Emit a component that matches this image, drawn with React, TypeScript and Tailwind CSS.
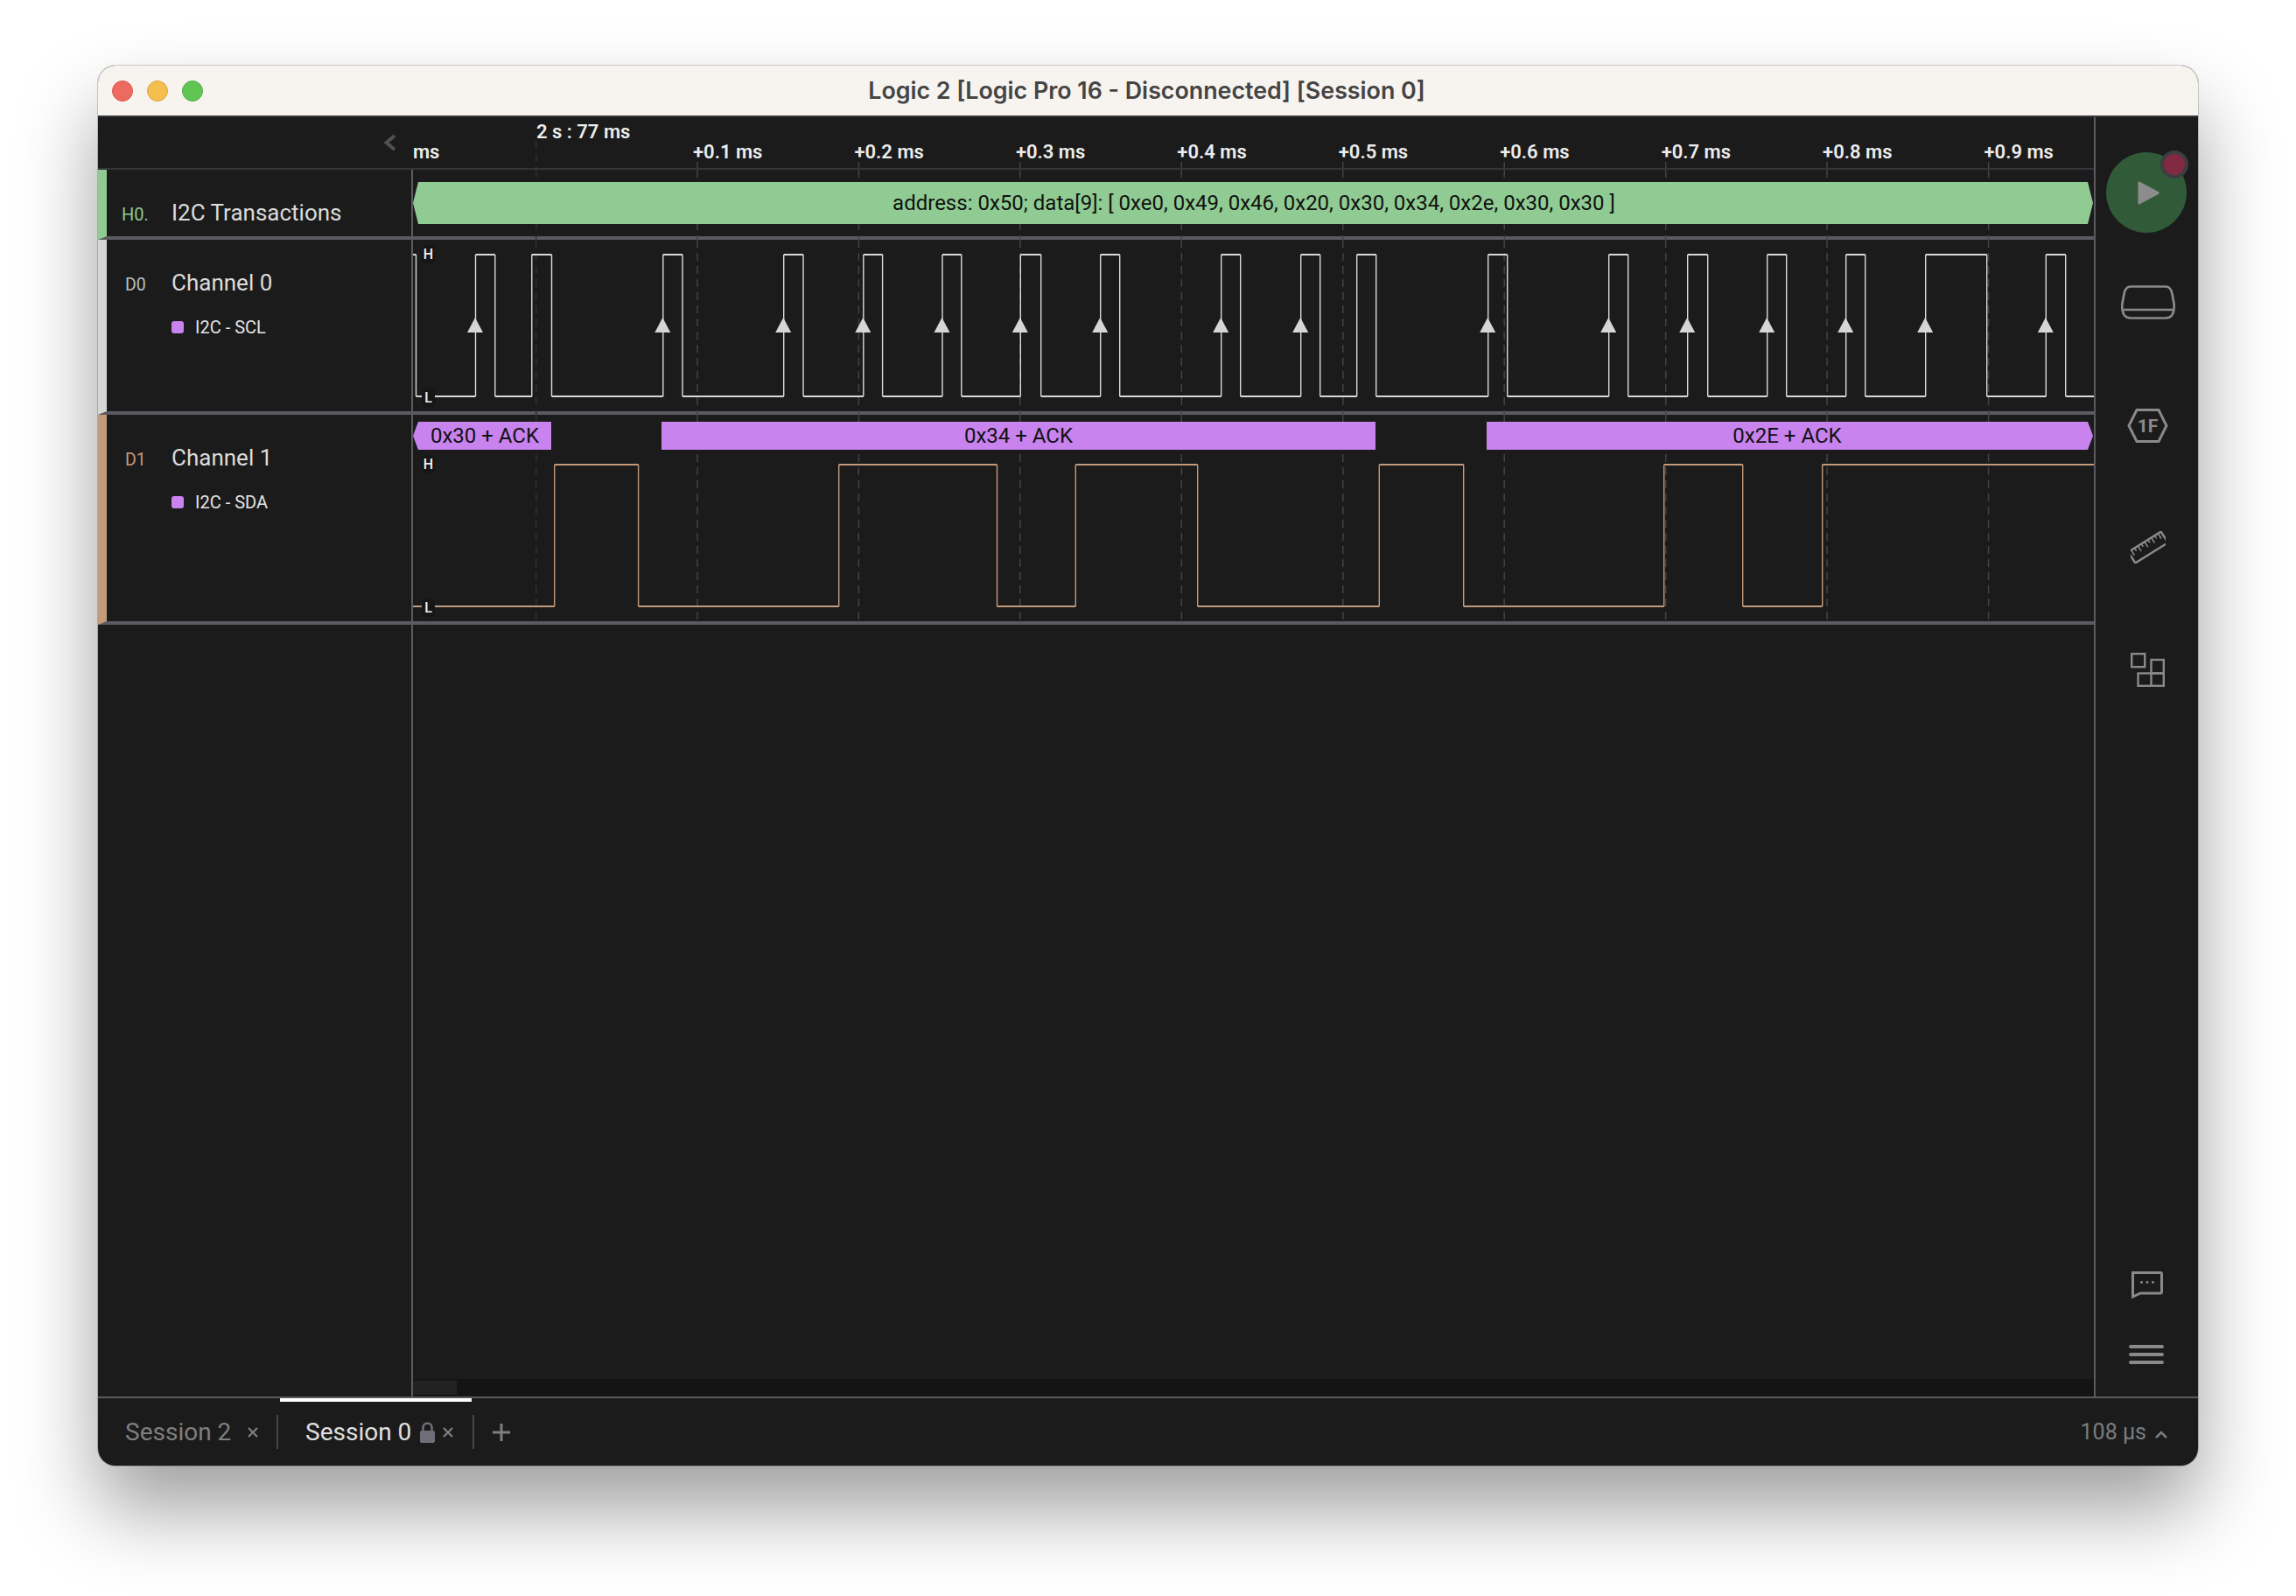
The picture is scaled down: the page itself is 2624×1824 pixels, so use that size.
const X0 = 472
const WAVE_W = 1921

const ticks = [797, 981.4, 1165.9, 1350.3, 1534.8, 1719.2, 1903.7, 2088.1, 2272.6]
const firstTick = 612.7

const sclRise = [543.5, 607.8, 757.8, 895.7, 986.8, 1077, 1166.3, 1257.7, 1395.7, 1486.7, 1550.7, 1700.7, 1838.7, 1928.7, 2019.7, 2109.7, 2200.7, 2338.3]
const sclFall = [565.8, 630.5, 780, 918, 1008.6, 1098.8, 1189.7, 1279.7, 1417.7, 1508.7, 1572.7, 1722.7, 1860.7, 1951.7, 2041.7, 2131.7, 2270.7, 2360.7]
const sclMarked = sclRise.filter((x) => x !== 607.8 && x !== 1550.7)

const sdaEdges = [633.7, 729.6, 958.7, 1139.5, 1229.3, 1368.7, 1576.3, 1672.7, 1901.7, 1991.7, 2082.7]

// signal edges are page x values, turned into separate wave segments
function Wave({ edges, high, low, startHigh, color }: { edges: number[]; high: number; low: number; startHigh: boolean; color: string }) {
  const pts = [X0, ...edges, X0 + WAVE_W]
  let flat = ""
  let steep = ""
  pts.slice(0, -1).forEach((x, i) => {
    const isHigh = startHigh ? i % 2 === 0 : i % 2 === 1
    flat += `M${x} ${isHigh ? high : low}H${pts[i + 1]}`
    if (i > 0) steep += `M${x} ${high}V${low}`
  })
  return (
    <>
      <path d={steep} stroke={color} strokeWidth="1.4" fill="none" />
      <path d={flat} stroke={color} strokeWidth="2" fill="none" />
    </>
  )
}

function Grid({ top, bottom }: { top: number; bottom: number }) {
  return (
    <>
      <path d={`M${firstTick} ${top}V${bottom}`} stroke="#303033" strokeWidth="1.5" strokeDasharray="9 6" />
      {ticks.map((x) => (
        <path key={x} d={`M${x} ${top}V${bottom}`} stroke="#434347" strokeWidth="1.5" strokeDasharray="9 6" />
      ))}
    </>
  )
}

function Canvas({ top, height, children }: { top: number; height: number; children?: React.ReactNode }) {
  return (
    <svg
      className="absolute left-0 top-0 overflow-visible"
      width={WAVE_W}
      height={height}
      viewBox={`${X0} ${top} ${WAVE_W} ${height}`}
    >
      {children}
    </svg>
  )
}

function Level({ label, className }: { label: string; className: string }) {
  return (
    <span className={`absolute left-[10px] flex h-[21px] w-[15px] items-center justify-center rounded-[5px] bg-[#161616] text-[16px] font-medium leading-none text-[#f0f0f0] ${className}`}>
      {label}
    </span>
  )
}

function Analyzer({ name }: { name: string }) {
  return (
    <div className="mt-[22px] flex items-center pl-[74px]">
      <span className="h-[14px] w-[14px] rounded-[3px] bg-[#c883ef]" />
      <span className="ml-[13px] text-[20px] leading-[24px] text-[#e4e4e4]">{name}</span>
    </div>
  )
}

function Close({ color = "#7f7f7f" }: { color?: string }) {
  return (
    <svg width="14" height="14" viewBox="0 0 14 14" className="shrink-0">
      <path d="M2 2L12 12M12 2L2 12" stroke={color} strokeWidth="2.2" />
    </svg>
  )
}

function Sidebar() {
  const c = "#8a8a8a"
  return (
    <aside className="flex w-[119px] shrink-0 flex-col items-center border-l-2 border-[#5a5a60] pb-[37px] pt-[40px]">
      <div className="relative flex h-[92px] w-[92px] -translate-x-[1px] items-center justify-center rounded-full bg-[#305a38]">
        <svg className="ml-[7px]" width="26" height="29" viewBox="0 0 26 29">
          <path d="M2 1.500L24 13.200Q25.500 14.500 24 15.800L2 27.500Q0.500 28 0.500 26V3Q0.500 1 2 1.500Z" fill="#8c8c8c" />
        </svg>
        <span className="absolute -right-[2px] -top-[2px] h-[32px] w-[32px] rounded-full border-4 border-[#3d3d42] bg-[#812a42]" />
      </div>

      <svg className="mt-[60px] translate-x-[1px]" width="62" height="39" viewBox="0 0 62 39" fill="none" stroke={c} strokeWidth="2.7">
        <path d="M11 1.500H51C55 1.500 57.500 4 58.500 10L60.700 22C61 27 60.500 31 58 34.500C56 37 54 37.500 51 37.500H11C8 37.500 6 37 4 34.500C1.500 31 1 27 1.300 22L3.500 10C4.500 4 7 1.500 11 1.500Z" />
        <path d="M2.500 28H59.500" />
      </svg>

      <svg className="mt-[102px] translate-x-[1px]" width="47" height="39" viewBox="0 0 47 39" fill="none">
        <path d="M11 1.500H36L45 19.500L36 37.500H11L2 19.500Z" stroke={c} strokeWidth="3" />
        <text x="23.500" y="27" textAnchor="middle" fontSize="21" fontWeight="700" fontFamily="Roboto, sans-serif" fill={c}>1F</text>
      </svg>

      <svg className="mt-[101px] translate-x-[1px]" width="40" height="37" viewBox="0 0 40 37" fill="none" stroke={c}>
        <g transform="rotate(-32 20 18.500)">
          <rect x="-2" y="11" width="44" height="15" strokeWidth="2.400" />
          <path d="M2 11v7M6.500 11v4M11 11v7M15.500 11v4M20 11v7M24.500 11v4M29 11v7M33.500 11v4M38 11v7" strokeWidth="1.600" />
        </g>
      </svg>

      <svg className="mt-[102px] translate-x-[1px]" width="39" height="39" viewBox="0 0 39 39" fill="none" stroke={c} strokeWidth="2.400">
        <rect x="1.200" y="1.200" width="15" height="15" />
        <rect x="23.500" y="8" width="14.300" height="15.500" />
        <rect x="8.500" y="23.500" width="29.300" height="14.300" />
        <path d="M23.500 23.500V37.800" />
      </svg>

      <svg className="mt-auto" width="36" height="31" viewBox="0 0 36 31" fill="none">
        <path d="M1.500 29V1.500H33Q34.500 1.500 34.500 3V23.500Q34.500 25 33 25H10Z" stroke={c} strokeWidth="3" />
        <circle cx="11.500" cy="12.500" r="1.400" fill={c} />
        <circle cx="18" cy="12.500" r="1.400" fill={c} />
        <circle cx="24.500" cy="12.500" r="1.400" fill={c} />
      </svg>

      <div className="mt-[53px] flex w-[40px] -translate-x-[1px] flex-col gap-[4.500px]">
        <span className="h-[4.500px] rounded-full bg-[#8a8a8a]" />
        <span className="h-[4.500px] rounded-full bg-[#8a8a8a]" />
        <span className="h-[4.500px] rounded-full bg-[#8a8a8a]" />
      </div>
    </aside>
  )
}

function Ruler() {
  return (
    <header className="relative h-[60px] shrink-0 border-b-2 border-[#35353a] text-[22px] font-semibold leading-[22px] text-[#ececec]">
      <svg className="absolute left-[326px] top-[19px]" width="15" height="20" viewBox="0 0 15 20">
        <path d="M13 2L3.500 10L13 18" stroke="#505050" strokeWidth="4" fill="none" />
      </svg>
      <div className="pl-[501px] pt-[6px]">2 s : 77 ms</div>
      <div className="mt-[1px] flex">
        <span className="ml-[360px] w-[320px] shrink-0">ms</span>
        {ticks.map((_, i) => (
          <span key={i} className="w-[184.450px] shrink-0 whitespace-nowrap">+0.{i + 1} ms</span>
        ))}
      </div>
      <svg className="absolute left-[360px] top-0 overflow-visible" width={WAVE_W} height="58" viewBox={`${X0} 134 ${WAVE_W} 58`}>
        <path d={`M${firstTick} 161V192`} stroke="#303033" strokeWidth="1.5" strokeDasharray="9 6" />
        {ticks.map((x) => (
          <path key={x} d={`M${x} 185V192`} stroke="#434347" strokeWidth="1.5" />
        ))}
      </svg>
    </header>
  )
}

export default function App() {
  return (
    <div className="h-[1824px] w-[2624px] overflow-hidden bg-white pl-[112px] pt-[75px] font-['Roboto',sans-serif]">
      <div className="flex h-[1600px] w-[2400px] flex-col overflow-hidden rounded-[20px] bg-[#1b1b1b] shadow-[0_50px_90px_rgba(0,0,0,0.38),0_0_0_1px_rgba(0,0,0,0.18)]">
        {/* title bar */}
        <div className="relative flex h-[59px] shrink-0 items-center justify-center border-b-2 border-[#35353a] bg-[#f7f3ef] pr-[3px]">
          <div className="absolute left-[16px] top-[17px] flex gap-[16px]">
            <span className="h-[24px] w-[24px] rounded-full border border-[#d9544c] bg-[#ec6a5e]" />
            <span className="h-[24px] w-[24px] rounded-full border border-[#d9a441] bg-[#f5bf4f]" />
            <span className="h-[24px] w-[24px] rounded-full border border-[#4fae48] bg-[#61c554]" />
          </div>
          <span className="text-[26.800px] font-semibold text-[#444444] font-['Inter',sans-serif]">
            Logic 2 [Logic Pro 16 - Disconnected] [Session 0]
          </span>
        </div>

        <div className="flex min-h-0 flex-1">
          <main className="flex min-w-0 flex-1 flex-col">
            <Ruler />

            {/* H0 */}
            <section className="flex h-[80px] shrink-0 border-b-4 border-l-[10px] border-b-[#5a5a60] border-l-[#8fcb92]">
              <div className="flex w-[348px] shrink-0 items-baseline pt-[34px]">
                <span className="w-[74px] pl-[17px] text-[20px] text-[#8fcb92]">H0.</span>
                <span className="text-[26px] leading-[30px] text-[#dcdcdc]">I2C Transactions</span>
              </div>
              <div className="relative flex-1 border-l-2 border-[#5a5a60]">
                <Canvas top={194} height={76}>
                  <Grid top={194} bottom={274} />
                </Canvas>
                <div className="relative mr-[1px] mt-[14px] flex h-[48px] items-center justify-center bg-[#8fcb92] pl-[2px] text-[24px] text-[#111111] [clip-path:polygon(6px_0,calc(100%-6px)_0,100%_50%,calc(100%-6px)_100%,6px_100%,0_50%)]">
                  address: 0x50; data[9]: [ 0xe0, 0x49, 0x46, 0x20, 0x30, 0x34, 0x2e, 0x30, 0x30 ]
                </div>
              </div>
            </section>

            {/* D0 */}
            <section className="flex h-[200px] shrink-0 border-b-4 border-l-[10px] border-b-[#5a5a60] border-l-[#d6d6d6]">
              <div className="w-[348px] shrink-0 pt-[34px]">
                <div className="flex items-baseline">
                  <span className="w-[74px] pl-[21px] text-[19.500px] text-[#bdbdbd]">D0</span>
                  <span className="text-[26px] leading-[30px] text-[#dcdcdc]">Channel 0</span>
                </div>
                <Analyzer name="I2C - SCL" />
              </div>
              <div className="relative flex-1 border-l-2 border-[#5a5a60]">
                <Canvas top={274} height={196}>
                  <Grid top={274} bottom={474} />
                  <Wave
                    edges={[475.5, ...sclRise.flatMap((x, i) => [x, sclFall[i]])]}
                    high={291}
                    low={453}
                    startHigh
                    color="#d9d9d9"
                  />
                  {sclMarked.map((x) => (
                    <path key={x} d={`M${x - 0.5} 363L${x + 8.5} 380H${x - 9.5}Z`} fill="#d6d6d6" />
                  ))}
                </Canvas>
                <Level label="H" className="top-[6px]" />
                <Level label="L" className="top-[170px]" />
              </div>
            </section>

            {/* D1 */}
            <section className="flex h-[240px] shrink-0 border-b-4 border-l-[10px] border-b-[#5a5a60] border-l-[#c39a7b]">
              <div className="w-[348px] shrink-0 pt-[34px]">
                <div className="flex items-baseline">
                  <span className="w-[74px] pl-[21px] text-[19.500px] text-[#c39a7b]">D1</span>
                  <span className="text-[26px] leading-[30px] text-[#dcdcdc]">Channel 1</span>
                </div>
                <Analyzer name="I2C - SDA" />
              </div>
              <div className="relative flex-1 border-l-2 border-[#5a5a60]">
                <Canvas top={474} height={236}>
                  <Grid top={474} bottom={710} />
                  <Wave edges={sdaEdges} high={531} low={693} startHigh={false} color="#c39a7b" />
                </Canvas>
                <Level label="H" className="top-[46px]" />
                <Level label="L" className="top-[210px]" />
                <div className="relative mt-[8px] flex h-[32px] text-[24px] text-[#111111]">
                  <div className="flex w-[158px] shrink-0 items-center justify-center bg-[#c883ef] pl-[6px] [clip-path:polygon(6px_0,100%_0,100%_100%,6px_100%,0_50%)]">0x30 + ACK</div>
                  <div className="ml-[126px] flex w-[816px] shrink-0 items-center justify-center bg-[#c883ef]">0x34 + ACK</div>
                  <div className="ml-[127px] flex w-[693px] shrink-0 items-center justify-center bg-[#c883ef] pr-[6px] [clip-path:polygon(0_0,calc(100%-6px)_0,100%_50%,calc(100%-6px)_100%,0_100%)]">0x2E + ACK</div>
                </div>
              </div>
            </section>

            {/* empty part of the capture */}
            <section className="flex min-h-0 flex-1">
              <div className="w-[358px] shrink-0" />
              <div className="flex flex-1 flex-col justify-end border-l-2 border-[#5a5a60]">
                <div className="h-[20px] bg-[#141414] py-[2px]">
                  <div className="h-[16px] w-[50px] bg-[#222222]" />
                </div>
              </div>
            </section>
          </main>

          <Sidebar />
        </div>

        {/* session tabs */}
        <footer className="flex h-[79px] shrink-0 items-center border-t-2 border-[#5a5a60] text-[28px] leading-[34px]">
          <div className="flex w-[204px] shrink-0 items-center pl-[31px] text-[#7f7f7f]">
            <span>Session 2</span>
            <span className="ml-[18px]"><Close /></span>
          </div>
          <span className="h-[39px] w-[2px] bg-[#444444]" />
          <div className="relative flex h-full w-[222px] shrink-0 items-center pl-[31px] text-[#e0e0e0]">
            <span className="absolute left-[2px] top-0 h-[4px] w-[219px] bg-white" />
            <span>Session 0</span>
            <svg className="ml-[10px] shrink-0" width="17" height="24" viewBox="0 0 17 24">
              <path d="M3.500 11V6.500a5 5 0 0 1 10 0V11" stroke="#6f6f7a" strokeWidth="2.500" fill="none" />
              <rect x="0" y="10" width="17" height="14" rx="2" fill="#6f6f7a" />
            </svg>
            <span className="ml-[8px]"><Close /></span>
          </div>
          <span className="h-[39px] w-[2px] bg-[#444444]" />
          <svg className="ml-[21px]" width="20" height="20" viewBox="0 0 20 20">
            <path d="M10 0V20M0 10H20" stroke="#7f7f7f" strokeWidth="3" />
          </svg>
          <div className="ml-auto flex items-center pr-[35px] text-[25px] text-[#7c7c7c]">
            <span>108 µs</span>
            <svg className="ml-[10px] mt-[6px]" width="14" height="9" viewBox="0 0 14 9">
              <path d="M1 8L7 2L13 8" stroke="#7c7c7c" strokeWidth="2.500" fill="none" />
            </svg>
          </div>
        </footer>
      </div>
    </div>
  )
}
